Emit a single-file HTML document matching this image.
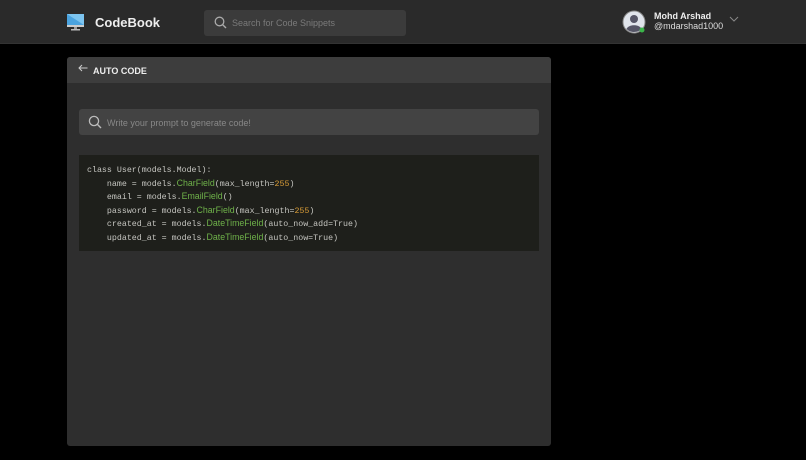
<!DOCTYPE html>
<html><head><meta charset="utf-8"><style>
*{margin:0;padding:0;box-sizing:border-box}
body{width:806px;height:460px;background:#000;font-family:"Liberation Sans",sans-serif;position:relative;overflow:hidden}
.hdr{position:absolute;left:0;top:0;width:806px;height:44px;background:#2a2a2a;border-bottom:1px solid #333}
.brand{position:absolute;left:95px;top:15px;color:#eee;font-weight:bold;font-size:13px}
.search{position:absolute;left:204px;top:10px;width:202px;height:26px;background:#3b3b3b;border-radius:3px;color:#7a7a7a;font-size:9px}
.search span{position:absolute;left:28px;top:8px}
.panel{position:absolute;left:67px;top:57px;width:484px;height:389px;background:#2e2e2e;border-radius:3px;overflow:hidden}
.ph{height:26px;background:#3d3d3d;color:#eee;font-size:9px;font-weight:bold}
.inp{position:absolute;left:12px;top:52px;width:460px;height:26px;background:#434343;border-radius:3px;color:#888;font-size:9px}
.code{position:absolute;left:12px;top:98px;width:460px;height:96px;background:#1e1f1b;font-family:"Liberation Mono",monospace;font-size:8.3px;color:#c5c5c0;padding:9px 8px;line-height:13.6px;white-space:pre}
.code div{height:13.6px}
.g{color:#6fb24a;font-family:"Liberation Sans",sans-serif;font-size:8.8px;line-height:1}
.o{color:#d69a36}
</style></head><body>
<div class="hdr">
<svg style="position:absolute;left:67px;top:14px" width="17" height="17" viewBox="0 0 17 17"><rect x="0" y="0" width="17" height="11" fill="#4aa3df"/><path d="M0 0L17 11V0z" fill="#7cc4ef"/><rect x="0" y="11" width="17" height="2" fill="#ccc"/><rect x="7" y="13" width="3" height="2" fill="#999"/><rect x="4" y="15" width="9" height="1.5" fill="#bbb"/></svg>
<div class="brand">CodeBook</div>
<div class="search"><svg style="position:absolute;left:10px;top:6px" width="13" height="13" viewBox="0 0 13 13"><circle cx="5.5" cy="5.5" r="4.3" stroke="#aaa" stroke-width="1.3" fill="none"/><path d="M8.6 8.6L12 12" stroke="#aaa" stroke-width="1.4"/></svg><span>Search for Code Snippets</span></div>
<svg style="position:absolute;left:622px;top:10px" width="24" height="24" viewBox="0 0 24 24"><circle cx="12" cy="12" r="11" fill="#dfe3ea" stroke="#888" stroke-width="1"/><circle cx="12" cy="9" r="4" fill="#556"/><path d="M4.5 19c2-5 13-5 15 0a11 11 0 0 1-15 0z" fill="#556"/><circle cx="20" cy="20" r="2.5" fill="#3bb54a"/></svg>
<div style="position:absolute;left:654px;top:11px;color:#eee;font-size:9px;font-weight:bold">Mohd Arshad</div>
<div style="position:absolute;left:654px;top:21px;color:#ddd;font-size:9px">@mdarshad1000</div>
<svg style="position:absolute;left:729px;top:16px" width="10" height="6" viewBox="0 0 10 6"><path d="M1 1L5 5L9 1" stroke="#888" fill="none" stroke-width="1"/></svg>
</div>
<div class="panel">
<div class="ph"><svg style="position:absolute;left:11px;top:7px" width="10" height="8" viewBox="0 0 10 8"><path d="M9.5 4H1M4 1L1 4L4 7" stroke="#ccc" fill="none" stroke-width="1"/></svg><span style="position:absolute;left:26px;top:9px">AUTO CODE</span></div>
<div class="inp"><svg style="position:absolute;left:9px;top:6px" width="14" height="14" viewBox="0 0 14 14"><circle cx="6" cy="6" r="4.6" stroke="#bbb" stroke-width="1.3" fill="none"/><path d="M9.3 9.3L13 13" stroke="#bbb" stroke-width="1.4"/></svg><span style="position:absolute;left:28px;top:9px">Write your prompt to generate code!</span></div>
<div class="code"><div>class User(models.Model):</div><div>    name = models.<span class="g">CharField</span>(max_length=<span class="o">255</span>)</div><div>    email = models.<span class="g">EmailField</span>()</div><div>    password = models.<span class="g">CharField</span>(max_length=<span class="o">255</span>)</div><div>    created_at = models.<span class="g">DateTimeField</span>(auto_now_add=True)</div><div>    updated_at = models.<span class="g">DateTimeField</span>(auto_now=True)</div></div>
</div>
</body></html>
